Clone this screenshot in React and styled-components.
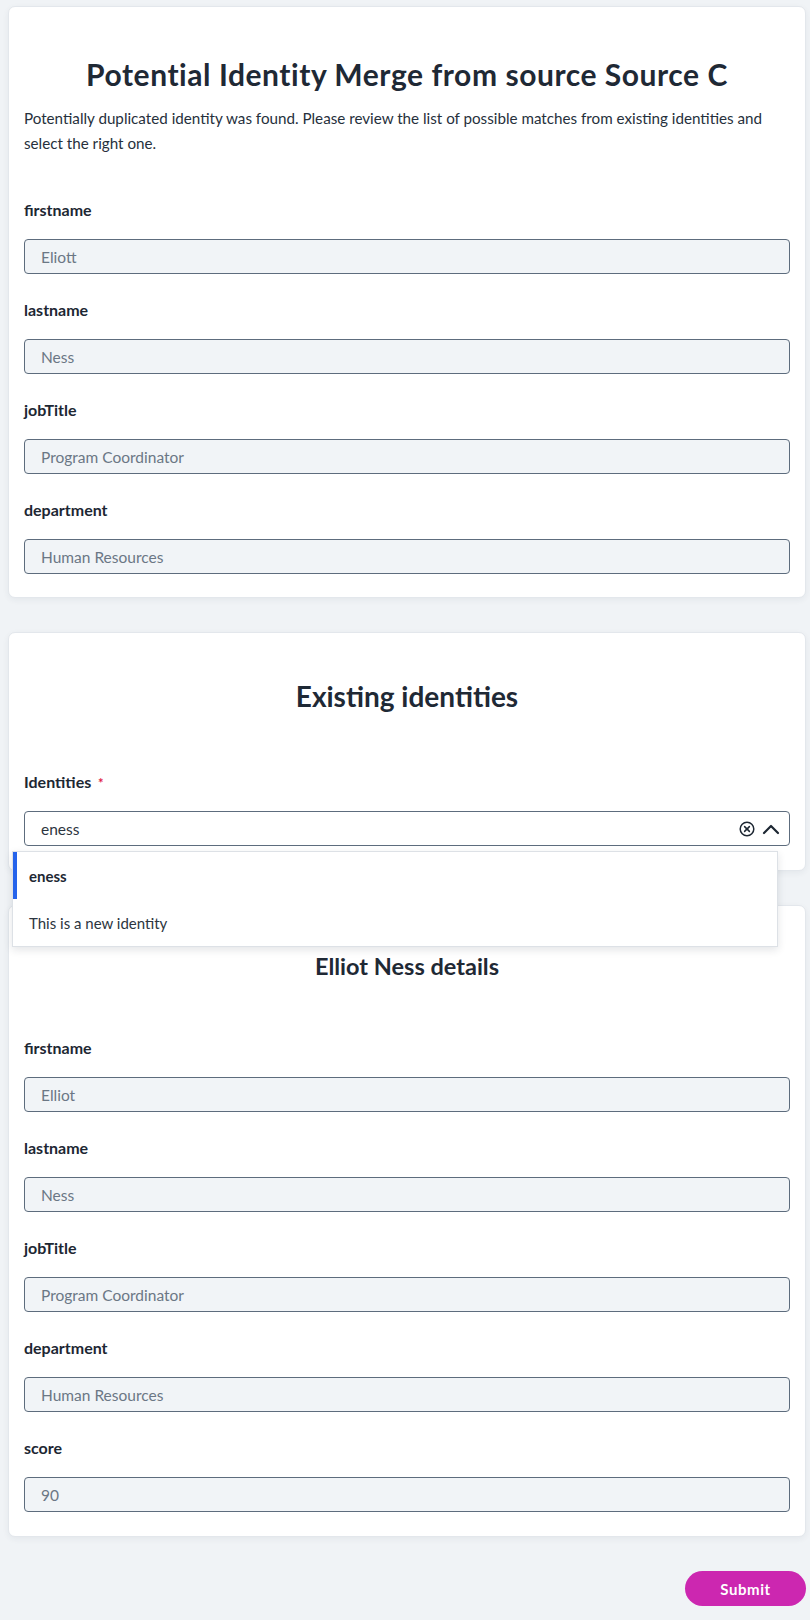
import React from 'react'
import styled, { createGlobalStyle } from 'styled-components';

const GlobalStyle = createGlobalStyle`
  body {
    margin: 0;
    background: #f0f3f6;
    font-family: Lato, "Noto Sans", sans-serif;
    color: #1d2733;
  }
`

const candidate = [
  { label: 'firstname', value: 'Eliott' },
  { label: 'lastname', value: 'Ness' },
  { label: 'jobTitle', value: 'Program Coordinator' },
  { label: 'department', value: 'Human Resources' },
]

const existing = [
  { label: 'firstname', value: 'Elliot' },
  { label: 'lastname', value: 'Ness' },
  { label: 'jobTitle', value: 'Program Coordinator' },
  { label: 'department', value: 'Human Resources' },
  { label: 'score', value: '90' },
]

const ReadOnlyField = ({ label, value }) => (
  <Field>
    <Label>{label}</Label>
    <TextBox>{value}</TextBox>
  </Field>
)

const App = () => {
  return (
    <>
      <GlobalStyle />
      <Page>
        <Card $top="49px" $bottom="23px">
          <Heading $size="30px" $spacing="0.55px">Potential Identity Merge from source Source C</Heading>
          <Intro>
            Potentially duplicated identity was found. Please review the list of possible matches from existing identities and select the right one.
          </Intro>
          <Fields>
            {candidate.map((f) => (
              <ReadOnlyField key={f.label} {...f} />
            ))}
          </Fields>
        </Card>

        <Card $top="45px" $bottom="24px" $raised>
          <Heading>Existing identities</Heading>
          <Fields $gap="58px">
            <Field>
              <Label>
                Identities <Required>*</Required>
              </Label>
              <SelectWrap>
                <SelectBox>
                  <span>eness</span>
                  <SelectIcons>
                    <svg width="16" height="16" viewBox="0 0 16 16" fill="none" stroke="#1d2733" strokeWidth="1.5">
                      <circle cx="8" cy="8" r="6.8" />
                      <path d="M5.6 5.6l4.8 4.8M10.4 5.6l-4.8 4.8" strokeLinecap="round" />
                    </svg>
                    <svg width="18" height="12" viewBox="0 0 18 12" fill="none" stroke="#1d2733" strokeWidth="2.2">
                      <path d="M2 10l7-7 7 7" strokeLinecap="round" strokeLinejoin="round" />
                    </svg>
                  </SelectIcons>
                </SelectBox>
                <Menu>
                  <Option $active>eness</Option>
                  <Option>This is a new identity</Option>
                </Menu>
              </SelectWrap>
            </Field>
          </Fields>
        </Card>

        <Card $top="45px" $bottom="24px">
          <Heading $size="23.5px" $line="30px">Elliot Ness details</Heading>
          <Fields $gap="57px">
            {existing.map((f) => (
              <ReadOnlyField key={f.label} {...f} />
            ))}
          </Fields>
        </Card>

        <Actions>
          <SubmitButton type="button">Submit</SubmitButton>
        </Actions>
      </Page>
    </>
  )
}

export default App;

const Page = styled.div`
  padding: 6px 4px 16px 8px;
  display: flex;
  flex-direction: column;
  gap: 34px;
`

const Card = styled.section`
  background: #fff;
  border: 1px solid #e3e7ec;
  border-radius: 7px;
  box-shadow: 0 2px 6px rgba(30, 45, 60, 0.06);
  padding: ${(p) => p.$top} 15px ${(p) => p.$bottom};
  position: relative;
  z-index: ${(p) => (p.$raised ? 2 : 'auto')};
`

const Heading = styled.h1`
  margin: 0;
  text-align: center;
  font-size: ${(p) => p.$size || '28px'};
  line-height: ${(p) => p.$line || '36px'};
  letter-spacing: ${(p) => p.$spacing || '0'};
  font-weight: 700;
  color: #1f2935;
`

const Intro = styled.p`
  margin: 14px 0 0;
  font-size: 15.2px;
  line-height: 24.5px;
  color: #26303c;
`

const Fields = styled.div`
  margin-top: ${(p) => p.$gap || '45px'};
  display: flex;
  flex-direction: column;
  gap: 26px;
`

const Field = styled.div`
  display: flex;
  flex-direction: column;
  gap: 19px;
`

const Label = styled.label`
  display: block;
  height: 20px;
  font-size: 16px;
  line-height: 20px;
  font-weight: 700;
  color: #1d2733;
`

const Required = styled.span`
  color: #e11d48;
  font-size: 13px;
  line-height: 1;
  margin-left: 3px;
`

const TextBox = styled.div`
  height: 35px;
  box-sizing: border-box;
  border: 1px solid #5d6c7d;
  border-radius: 4px;
  background: #f1f4f7;
  padding: 0 16px;
  display: flex;
  align-items: center;
  font-size: 15.5px;
  color: #6b7785;
`

const SelectWrap = styled.div`
  position: relative;
`

const SelectBox = styled.div`
  height: 35px;
  box-sizing: border-box;
  border: 1px solid #5d6c7d;
  border-radius: 4px;
  background: #fff;
  padding: 0 9px 0 16px;
  display: flex;
  align-items: center;
  justify-content: space-between;
  font-size: 15.5px;
  color: #2c3540;
`

const SelectIcons = styled.div`
  display: flex;
  align-items: center;
  gap: 7px;
`

const Menu = styled.ul`
  position: absolute;
  top: 40px;
  left: -12px;
  right: 12px;
  margin: 0;
  padding: 0;
  list-style: none;
  background: #fff;
  border: 1px solid #dde1e6;
  box-shadow: 0 3px 8px rgba(30, 45, 60, 0.12);
  z-index: 5;
`

const Option = styled.li`
  height: 47px;
  display: flex;
  align-items: center;
  padding-left: 12px;
  font-size: 15px;
  font-weight: ${(p) => (p.$active ? 700 : 400)};
  color: ${(p) => (p.$active ? '#1d2733' : '#2c3540')};
  border-left: 4px solid ${(p) => (p.$active ? '#2563eb' : 'transparent')};
  box-sizing: border-box;
`

const Actions = styled.div`
  display: flex;
  justify-content: flex-end;
`

const SubmitButton = styled.button`
  width: 121px;
  height: 35px;
  border: none;
  border-radius: 18px;
  background: #cc27b0;
  color: #fff;
  font-family: Lato, "Noto Sans", sans-serif;
  font-size: 15px;
  font-weight: 700;
  letter-spacing: 0.6px;
  cursor: pointer;
`
